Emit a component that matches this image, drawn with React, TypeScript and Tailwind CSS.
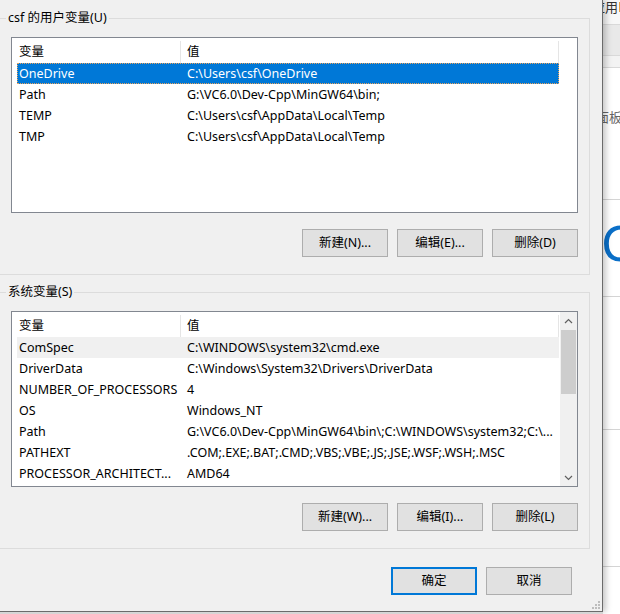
import React from 'react';

// 环境变量对话框（局部截图）

type EnvVar = [string, string];

const userVars: EnvVar[] = [
  ['OneDrive', 'C:\\Users\\csf\\OneDrive'],
  ['Path', 'G:\\VC6.0\\Dev-Cpp\\MinGW64\\bin;'],
  ['TEMP', 'C:\\Users\\csf\\AppData\\Local\\Temp'],
  ['TMP', 'C:\\Users\\csf\\AppData\\Local\\Temp'],
];

const sysVars: EnvVar[] = [
  ['ComSpec', 'C:\\WINDOWS\\system32\\cmd.exe'],
  ['DriverData', 'C:\\Windows\\System32\\Drivers\\DriverData'],
  ['NUMBER_OF_PROCESSORS', '4'],
  ['OS', 'Windows_NT'],
  ['Path', 'G:\\VC6.0\\Dev-Cpp\\MinGW64\\bin\\;C:\\WINDOWS\\system32;C:\\...'],
  ['PATHEXT', '.COM;.EXE;.BAT;.CMD;.VBS;.VBE;.JS;.JSE;.WSF;.WSH;.MSC'],
  ['PROCESSOR_ARCHITECT...', 'AMD64'],
];

const Button: React.FC<{ label: string; primary?: boolean }> = ({ label, primary }) => (
  <button
    className={`w-[86px] h-[28px] bg-[#e1e1e1] text-[12.5px] text-black flex items-center justify-center ${
      primary ? 'border-2 border-[#0078d7]' : 'border border-[#adadad]'
    }`}
  >
    {label}
  </button>
);

const Header: React.FC = () => (
  <div className="flex h-[25px] shrink-0 pt-[3px]">
    <div className="w-[169px] pl-[7px] border-r border-[#e5e5e5] flex items-center">变量</div>
    <div className="w-[378px] pl-[6px] border-r border-[#e5e5e5] flex items-center">值</div>
  </div>
);

const Row: React.FC<{ v: EnvVar; state?: 'focus' | 'soft' }> = ({ v, state }) => {
  const bg =
    state === 'focus'
      ? 'bg-[#0078d7] text-white outline outline-1 outline-dotted outline-[#e9a35c] -outline-offset-1'
      : state === 'soft'
      ? 'bg-[#f0f0f0] text-black'
      : 'text-black';
  return (
    <div className={`flex h-[21px] w-[542px] ml-[5px] pt-[2px] items-center whitespace-nowrap ${bg}`}>
      <div className="w-[164px] pl-[2px] overflow-hidden">{v[0]}</div>
      <div className="flex-1 pl-[6px] overflow-hidden">{v[1]}</div>
    </div>
  );
};

const Chevron: React.FC<{ up?: boolean }> = ({ up }) => (
  <svg width="9" height="6" viewBox="0 0 9 6">
    <polyline
      points={up ? '1,5 4.5,1.5 8,5' : '1,1 4.5,4.5 8,1'}
      fill="none"
      stroke="#606060"
      strokeWidth="1.2"
    />
  </svg>
);

const SizeGrip: React.FC = () => (
  <svg width="8" height="8" viewBox="0 0 8 8">
    {[
      [6, 0],
      [3, 3],
      [6, 3],
      [0, 6],
      [3, 6],
      [6, 6],
    ].map(([x, y], i) => (
      <rect key={i} x={x} y={y} width="2" height="2" fill="#bdbdbd" />
    ))}
  </svg>
);

const GroupBox: React.FC<{ title: string; children: React.ReactNode; className?: string }> = ({
  title,
  children,
  className,
}) => (
  <fieldset className={`w-[590px] border border-l-0 border-[#dcdcdc] pb-[17px] ${className ?? ''}`}>
    <legend className="ml-[6px] px-[2px] leading-[16px] text-[12.5px] text-black">{title}</legend>
    <div className="pt-[11px] pl-[11px]">{children}</div>
  </fieldset>
);

export default function App() {
  return (
    <div className="w-[620px] h-[614px] overflow-hidden flex bg-[#fafafa] font-['Segoe_UI','Noto_Sans','Noto_Sans_CJK_SC',sans-serif] text-[12.5px]">
      {/* 左侧：对话框 */}
      <div className="w-[603px] flex flex-col shrink-0 relative z-10">
        <div className="h-[612px] bg-[#f0f0f0] border-r border-b border-[#6b6b6b] shadow-[3px_0_6px_rgba(0,0,0,0.22)] pt-[10px] flex flex-col overflow-hidden">
          <GroupBox title="csf 的用户变量(U)">
            <div className="w-[567px] h-[176px] border border-[#828790] bg-white flex flex-col overflow-hidden">
              <Header />
              {userVars.map((v, i) => (
                <Row key={i} v={v} state={i === 0 ? 'focus' : undefined} />
              ))}
            </div>
            <div className="w-[567px] mt-[16px] flex justify-end gap-[9px]">
              <Button label="新建(N)..." />
              <Button label="编辑(E)..." />
              <Button label="删除(D)" />
            </div>
          </GroupBox>

          <GroupBox title="系统变量(S)" className="mt-[9px]">
            <div className="w-[567px] h-[176px] border border-[#828790] bg-white flex overflow-hidden">
              <div className="flex-1 flex flex-col overflow-hidden">
                <Header />
                {sysVars.map((v, i) => (
                  <Row key={i} v={v} state={i === 0 ? 'soft' : undefined} />
                ))}
              </div>
              <div className="w-[17px] bg-[#f0f0f0] flex flex-col">
                <div className="h-[17px] flex items-center justify-center">
                  <Chevron up />
                </div>
                <div className="flex-1 px-[1px] pt-[1px]">
                  <div className="h-[64px] bg-[#cdcdcd]" />
                </div>
                <div className="h-[17px] flex items-center justify-center">
                  <Chevron />
                </div>
              </div>
            </div>
            <div className="w-[567px] mt-[16px] flex justify-end gap-[9px]">
              <Button label="新建(W)..." />
              <Button label="编辑(I)..." />
              <Button label="删除(L)" />
            </div>
          </GroupBox>

          <div className="mt-[18px] pr-[30px] flex justify-end gap-[9px]">
            <Button label="确定" primary />
            <Button label="取消" />
          </div>
          <div className="flex-1 flex items-end justify-end pr-[2px] pb-[2px]">
            <SizeGrip />
          </div>
        </div>
        <div className="flex-1 bg-[#d6d6d6]" />
      </div>

      {/* 右侧：后方窗口 */}
      <div className="flex-1 flex flex-col overflow-hidden">
        <div className="h-[25px] border-b border-[#d9d9d9] bg-[#f7f7f7] flex items-start whitespace-nowrap">
          <span className="-ml-[11px] leading-[14px] text-[13px] text-[#333]">应用</span>
          <span className="ml-[1px] mt-[2px] w-[2px] h-[10px] bg-[#f0a040]" />
        </div>
        <div className="h-[31px] border-b border-[#d9d9d9] bg-[#e9e9e9]" />
        <div className="h-[12px] border-b border-[#d9d9d9] bg-[#f3f3f3]" />
        <div className="h-[132px] border-b border-[#d4d4d4] bg-white pt-[40px] whitespace-nowrap">
          <span className="-ml-[7px] text-[13px] text-[#666]">面板</span>
        </div>
        <div className="h-[97px] border-b border-[#d4d4d4] bg-white pt-[14px] whitespace-nowrap">
          <span className="block -ml-[2px] text-[50px] leading-[56px] font-normal text-[#0a6fc8]">C</span>
        </div>
        <div className="h-[133px] border-b border-[#d4d4d4] bg-white" />
        <div className="h-[137px] border-b border-[#d4d4d4] bg-white" />
        <div className="flex-1 bg-white" />
      </div>
    </div>
  );
}
